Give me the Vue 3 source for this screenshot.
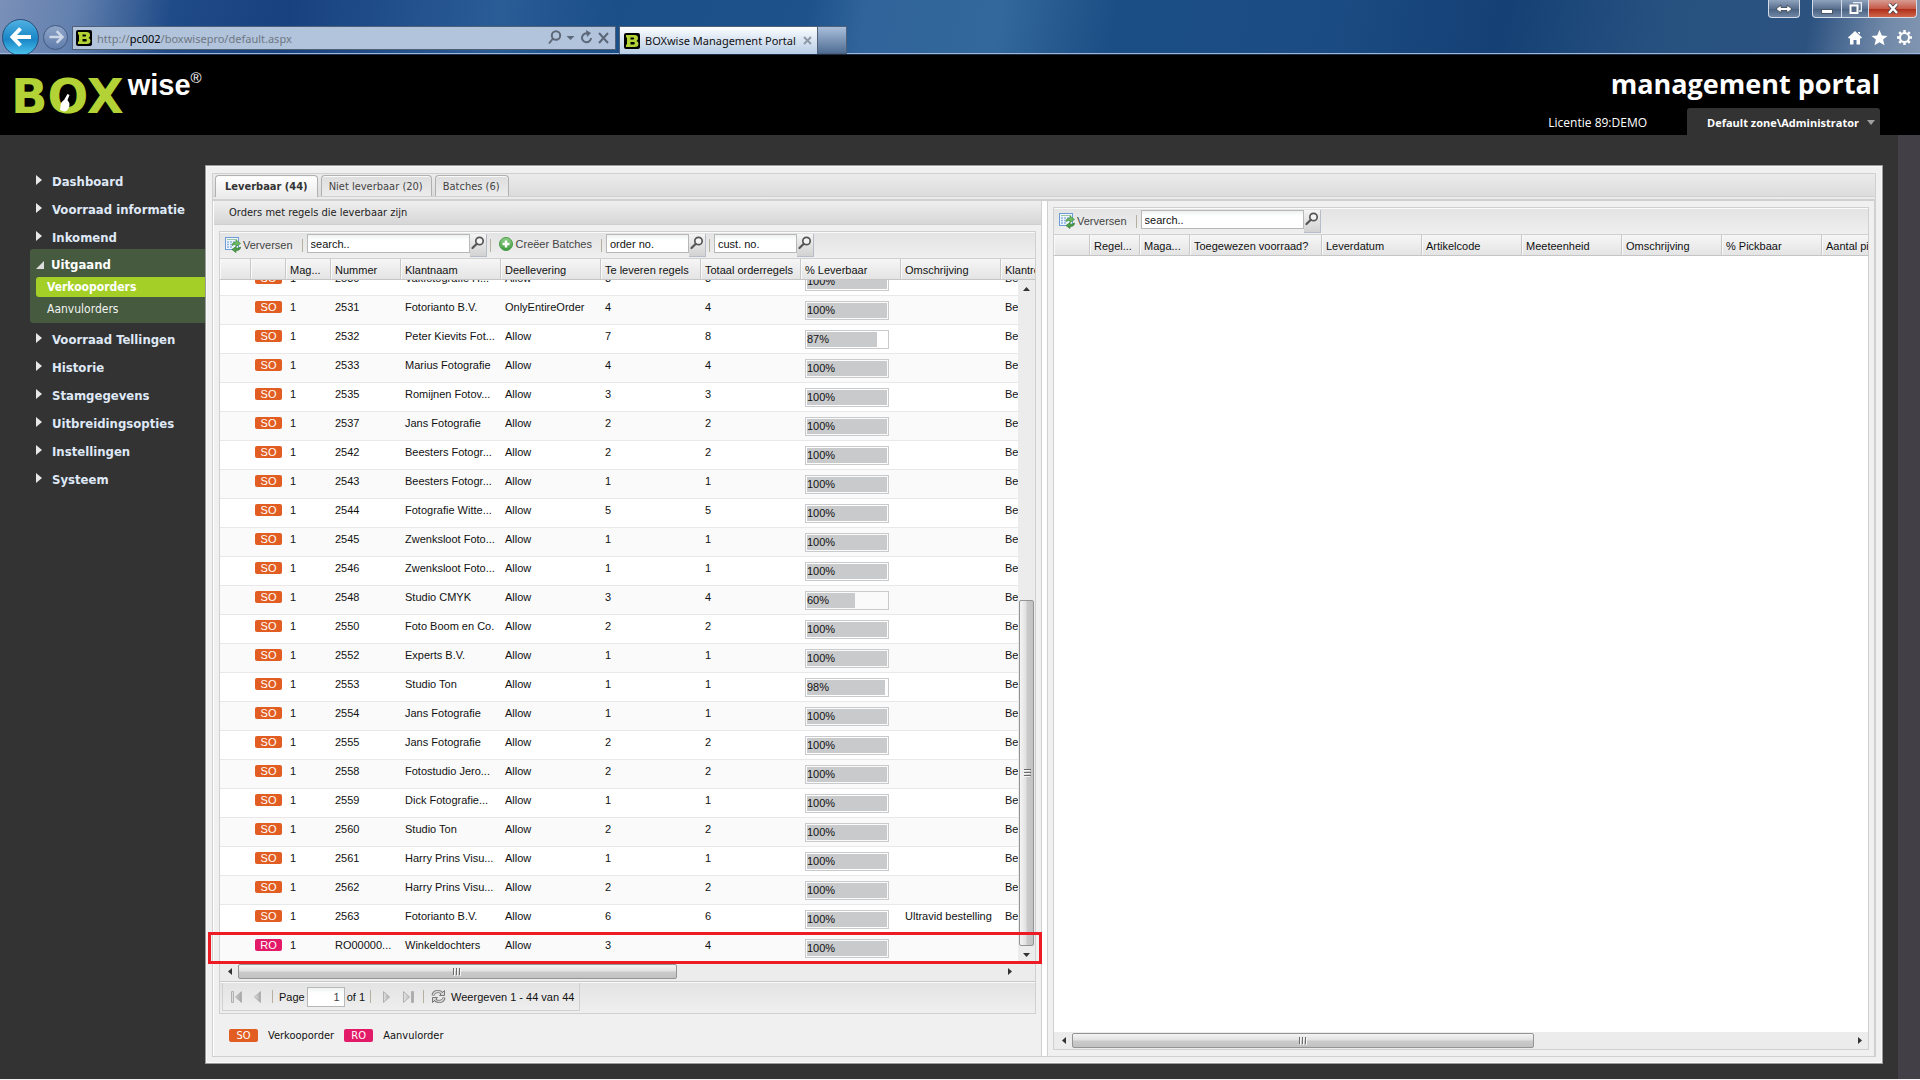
<script setup>
const menuTop = ['Dashboard', 'Voorraad informatie', 'Inkomend']
const menuBottom = ['Voorraad Tellingen', 'Historie', 'Stamgegevens', 'Uitbreidingsopties', 'Instellingen', 'Systeem']

const orderColumns = [
  { label: '', width: 31 },
  { label: '', width: 35 },
  { label: 'Mag...', width: 45 },
  { label: 'Nummer', width: 70 },
  { label: 'Klantnaam', width: 100 },
  { label: 'Deellevering', width: 100 },
  { label: 'Te leveren regels', width: 100 },
  { label: 'Totaal orderregels', width: 100 },
  { label: '% Leverbaar', width: 100 },
  { label: 'Omschrijving', width: 100 },
  { label: 'Klantreferentie', width: 100 },
]

const lineColumns = [
  { label: '', width: 36 },
  { label: 'Regel...', width: 50 },
  { label: 'Maga...', width: 50 },
  { label: 'Toegewezen voorraad?', width: 132 },
  { label: 'Leverdatum', width: 100 },
  { label: 'Artikelcode', width: 100 },
  { label: 'Meeteenheid', width: 100 },
  { label: 'Omschrijving', width: 100 },
  { label: '% Pickbaar', width: 100 },
  { label: 'Aantal pickbaar', width: 100 },
]

const orders = [
  ['SO', '2530', 'Vakfotografie H...', 'Allow', 3, 3, 100],
  ['SO', '2531', 'Fotorianto B.V.', 'OnlyEntireOrder', 4, 4, 100],
  ['SO', '2532', 'Peter Kievits Fot...', 'Allow', 7, 8, 87],
  ['SO', '2533', 'Marius Fotografie', 'Allow', 4, 4, 100],
  ['SO', '2535', 'Romijnen Fotov...', 'Allow', 3, 3, 100],
  ['SO', '2537', 'Jans Fotografie', 'Allow', 2, 2, 100],
  ['SO', '2542', 'Beesters Fotogr...', 'Allow', 2, 2, 100],
  ['SO', '2543', 'Beesters Fotogr...', 'Allow', 1, 1, 100],
  ['SO', '2544', 'Fotografie Witte...', 'Allow', 5, 5, 100],
  ['SO', '2545', 'Zwenksloot Foto...', 'Allow', 1, 1, 100],
  ['SO', '2546', 'Zwenksloot Foto...', 'Allow', 1, 1, 100],
  ['SO', '2548', 'Studio CMYK', 'Allow', 3, 4, 60],
  ['SO', '2550', 'Foto Boom en Co.', 'Allow', 2, 2, 100],
  ['SO', '2552', 'Experts B.V.', 'Allow', 1, 1, 100],
  ['SO', '2553', 'Studio Ton', 'Allow', 1, 1, 98],
  ['SO', '2554', 'Jans Fotografie', 'Allow', 1, 1, 100],
  ['SO', '2555', 'Jans Fotografie', 'Allow', 2, 2, 100],
  ['SO', '2558', 'Fotostudio Jero...', 'Allow', 2, 2, 100],
  ['SO', '2559', 'Dick Fotografie...', 'Allow', 1, 1, 100],
  ['SO', '2560', 'Studio Ton', 'Allow', 2, 2, 100],
  ['SO', '2561', 'Harry Prins Visu...', 'Allow', 1, 1, 100],
  ['SO', '2562', 'Harry Prins Visu...', 'Allow', 2, 2, 100],
  ['SO', '2563', 'Fotorianto B.V.', 'Allow', 6, 6, 100, 'Ultravid bestelling'],
  ['RO', 'RO00000...', 'Winkeldochters', 'Allow', 3, 4, 100],
].map(([type, number, customer, partial, open, total, percent, description = '']) => ({
  type, number, customer, partial, open, total, percent, description,
  reference: type === 'SO' ? 'Be' : '',
}))
</script>

<template>
  <svg class="defs" aria-hidden="true">
    <defs>
      <linearGradient id="plusFill" x1="0" y1="0" x2="0" y2="1">
        <stop offset="0" stop-color="#8fd08a" />
        <stop offset="1" stop-color="#3d9a3a" />
      </linearGradient>
      <linearGradient id="pagerFill" x1="0" y1="0" x2="1" y2="0">
        <stop offset="0" stop-color="#e4e4e4" />
        <stop offset="1" stop-color="#a4a4a4" />
      </linearGradient>
    </defs>
    <symbol id="favicon" viewBox="0 0 16 16">
      <rect width="16" height="16" rx="2" fill="#000" />
      <path fill="#b2d235" fill-rule="evenodd" d="M2 2h8.500q3.500 0 3.500 3.200 0 2-1.500 2.700 2 .6 2 2.900 0 3.200-3.800 3.200H2v-2.500h1v-7H2zM6.500 4.500v2H9q1.200 0 1.200-1t-1.200-1zM6.500 9v2.500h3q1.300 0 1.300-1.200T9.500 9z" />
    </symbol>
    <symbol id="refresh-grid" viewBox="0 0 16 16">
      <rect x=".5" y=".5" width="13" height="12" fill="#eef5fd" stroke="#6b9bd8" />
      <path d="M2 2.500h10" stroke="#9cc6a0" />
      <path d="M2 5h2M5 5h2M2 7.500h2M5 7.500h2M2 10h2M5 10h2M8 5h2" stroke="#8fb4e0" stroke-width="1.500" />
      <path d="M7 8.500q0-3.500 4-3.500V3l4.500 3.500L11 9.500V7.500q-2.500 0-4 1z" fill="#6dbb62" stroke="#3f8d3c" stroke-width=".7" />
      <path d="M15.500 10q0 3.500-4.500 3.500V15.500L7 12.500l4-3v1.800q3 0 4.500-1.300z" fill="#4ea04a" stroke="#2f7a30" stroke-width=".7" />
    </symbol>
    <symbol id="magnifier" viewBox="0 0 14 14">
      <circle cx="8.500" cy="5" r="3.700" fill="#f4f4f4" stroke="#555" stroke-width="1.700" />
      <path d="M5.800 7.800L1.500 12" stroke="#555" stroke-width="2.200" stroke-linecap="round" />
    </symbol>
    <symbol id="grip" viewBox="0 0 10 8">
      <path d="M1.500 0v7M4.500 0v7M7.500 0v7" stroke="#6a6a6a" />
      <path d="M2.500 1v7M5.500 1v7M8.500 1v7" stroke="#f6f6f6" />
    </symbol>
  </svg>

  <div class="page">
    <header class="chrome">
      <div class="nav-buttons">
        <button class="back" aria-label="Terug">
          <svg width="22" height="22" viewBox="0 0 22 22"><path d="M10.500 2.500L2.500 11l8 8.500M3 11h18" fill="none" stroke="#fff" stroke-width="4" /></svg>
        </button>
        <button class="forward" aria-label="Vooruit">
          <svg width="16" height="16" viewBox="0 0 22 22"><path d="M12 3l8 8-8 8M2 11h17" fill="none" stroke="#cdd8e8" stroke-width="3.500" /></svg>
        </button>
      </div>
      <div class="address">
        <svg width="16" height="16"><use href="#favicon" /></svg>
        <span class="url">http://<b>pc002</b>/boxwisepro/default.aspx</span>
        <svg class="address-icons" width="62" height="16" viewBox="0 0 62 16" fill="none" stroke="#5c6778" stroke-width="2">
          <circle cx="8" cy="5.500" r="4.200" />
          <path d="M5 8.500L1 13.500" />
          <path d="M18.500 6h8l-4 4z" fill="#5c6778" stroke="none" />
          <path d="M40 3.500a4.500 4.500 0 1 0 3 4.500" />
          <path d="M38 0l5 3-4 4z" fill="#5c6778" stroke="none" />
          <path d="M51 3l9 10M60 3l-9 10" />
        </svg>
      </div>
      <div class="browser-tab">
        <svg width="16" height="16"><use href="#favicon" /></svg>
        <span>BOXwise Management Portal</span>
        <svg width="9" height="9" viewBox="0 0 9 9"><path d="M1 1l7 7M8 1L1 8" stroke="#8f98a5" stroke-width="2" /></svg>
      </div>
      <button class="new-tab" aria-label="Nieuw tabblad"></button>
      <div class="window-side">
        <div class="window-buttons">
          <button class="win resize" aria-label="Formaat">
            <svg width="18" height="10" viewBox="0 0 18 10"><path d="M1 5l5-4v2.500h6V1l5 4-5 4V6.500H6V9z" fill="#fff" stroke="#4c5563" /></svg>
          </button>
          <div class="win-group">
            <button class="win min" aria-label="Minimaliseren"><svg width="12" height="6" viewBox="0 0 12 6"><rect x=".5" y="1.500" width="11" height="4" fill="#fff" stroke="#4c5563" /></svg></button>
            <button class="win max" aria-label="Herstellen"><svg width="13" height="13" viewBox="0 0 13 13"><path d="M4 .5h8.500v8.500H10" fill="none" stroke="#e8edf3" stroke-width="1.500" /><rect x="1.500" y="3.500" width="7" height="7.500" fill="#536985" stroke="#fff" stroke-width="2" /></svg></button>
            <button class="win close" aria-label="Sluiten"><svg width="12" height="11" viewBox="0 0 12 11"><path d="M2 1l8 9M10 1L2 10" stroke="#4c3a40" stroke-width="4" /><path d="M2 1l8 9M10 1L2 10" stroke="#fff" stroke-width="2.500" /></svg></button>
          </div>
        </div>
        <svg class="tools" width="64" height="16" viewBox="0 0 64 16" fill="#fff">
          <path d="M7 1l7 6.500-1.200 1.200L12 8v6.500H8.500V10h-3v4.500H2V8l-.8.700L0 7.500zM10 2h2v2.500l-2-1.800z" />
          <path d="M31.500 0l2.300 5.500 5.700.4-4.400 3.700 1.400 5.700-5-3.100-5 3.100 1.400-5.700-4.400-3.700 5.700-.4z" />
          <circle cx="56.500" cy="7.500" r="4.500" fill="none" stroke="#fff" stroke-width="2" />
          <path d="M56.500 0v3M56.500 12v3M49 7.500h3M61 7.500h3M51.200 2.200l2 2M59.800 10.800l2 2M61.800 2.200l-2 2M53.200 10.800l-2 2" stroke="#fff" stroke-width="2.500" />
        </svg>
      </div>
    </header>

    <div class="banner">
      <div class="logo">
        <span class="logo-box">BOX</span><span class="logo-wise">wise</span><span class="logo-reg">®</span>
        <svg class="logo-hand" width="12" height="18" viewBox="0 0 12 18"><path d="M8.500 0l2 1-2 5 1.800 3q.8 5-2.300 7.500-3 2-7-.5l.5-4Q1.500 8 5 6z" fill="#fff" /></svg>
      </div>
      <div class="banner-right">
        <h1>management portal</h1>
        <div class="account">
          <span class="licence">Licentie 89:DEMO</span>
          <button class="user">Default zone\Administrator
            <svg width="8" height="5" viewBox="0 0 8 5"><path d="M0 0h8L4 5z" fill="#a0a0a0" /></svg>
          </button>
        </div>
      </div>
    </div>

    <div class="workspace">
      <nav class="sidebar">
        <a v-for="item in menuTop" :key="item" href="#" class="menu-item">
          <svg width="6" height="10" viewBox="0 0 6 10"><path d="M0 0l6 5-6 5z" fill="#e8e8e8" /></svg>{{ item }}
        </a>
        <div class="menu-open">
          <a href="#" class="menu-head">
            <svg width="8" height="8" viewBox="0 0 8 8"><path d="M8 0v8H0z" fill="#dcdcdc" /></svg>Uitgaand
          </a>
          <a href="#" class="sub active">Verkooporders</a>
          <a href="#" class="sub">Aanvulorders</a>
        </div>
        <a v-for="item in menuBottom" :key="item" href="#" class="menu-item">
          <svg width="6" height="10" viewBox="0 0 6 10"><path d="M0 0l6 5-6 5z" fill="#e8e8e8" /></svg>{{ item }}
        </a>
      </nav>

      <main class="panel">
        <div class="panel-inner">
          <div class="tabs">
            <button class="tab selected">Leverbaar (44)</button>
            <button class="tab">Niet leverbaar (20)</button>
            <button class="tab">Batches (6)</button>
          </div>
          <div class="split">
            <section class="pane left">
              <h2>Orders met regels die leverbaar zijn</h2>
              <div class="pane-body">
                <div class="grid">
                  <div class="toolbar">
                    <button class="tool"><svg width="16" height="16"><use href="#refresh-grid" /></svg>Verversen</button>
                    <i class="sep wide-gap"></i>
                    <div class="search wide"><input aria-label="Zoeken" value="search.." /><button aria-label="Zoek"><svg width="14" height="14"><use href="#magnifier" /></svg></button></div>
                    <i class="sep tight"></i>
                    <button class="tool add">
                      <svg width="14" height="14" viewBox="0 0 14 14"><circle cx="7" cy="7" r="6.500" fill="url(#plusFill)" stroke="#4b9a48" /><path d="M7 3.500v7M3.500 7h7" stroke="#fff" stroke-width="2.500" /></svg>Creëer Batches
                    </button>
                    <i class="sep wide-gap"></i>
                    <div class="search"><input aria-label="Ordernummer" value="order no." /><button aria-label="Zoek order"><svg width="14" height="14"><use href="#magnifier" /></svg></button></div>
                    <i class="sep tight"></i>
                    <div class="search"><input aria-label="Klantnummer" value="cust. no." /><button aria-label="Zoek klant"><svg width="14" height="14"><use href="#magnifier" /></svg></button></div>
                  </div>
                  <div class="grid-head">
                    <table>
                      <colgroup><col v-for="(c, i) in orderColumns" :key="i" :style="{ width: c.width + 'px' }" /></colgroup>
                      <thead><tr><th v-for="(c, i) in orderColumns" :key="i">{{ c.label }}</th></tr></thead>
                    </table>
                  </div>
                  <div class="grid-body">
                    <div class="rows">
                      <table>
                        <colgroup><col v-for="(c, i) in orderColumns" :key="i" :style="{ width: c.width + 'px' }" /></colgroup>
                        <tbody>
                          <tr v-for="o in orders" :key="o.number">
                            <td></td>
                            <td><span class="badge" :class="o.type">{{ o.type }}</span></td>
                            <td>1</td>
                            <td>{{ o.number }}</td>
                            <td>{{ o.customer }}</td>
                            <td>{{ o.partial }}</td>
                            <td>{{ o.open }}</td>
                            <td>{{ o.total }}</td>
                            <td><div class="meter"><div class="fill" :style="{ width: o.percent + '%' }">{{ o.percent }}%</div></div></td>
                            <td>{{ o.description }}</td>
                            <td>{{ o.reference }}</td>
                          </tr>
                        </tbody>
                      </table>
                    </div>
                    <div class="vscroll">
                      <span class="arrow"><svg width="7" height="4" viewBox="0 0 7 4"><path d="M0 4h7L3.500 0z" fill="#333" /></svg></span>
                      <span class="track-top"></span>
                      <span class="vthumb"><svg class="turned" width="10" height="8"><use href="#grip" /></svg></span>
                      <span class="arrow"><svg width="7" height="4" viewBox="0 0 7 4"><path d="M0 0h7L3.500 4z" fill="#333" /></svg></span>
                    </div>
                    <div class="highlight"></div>
                  </div>
                  <div class="hscroll with-corner">
                    <span class="arrow"><svg width="4" height="7" viewBox="0 0 4 7"><path d="M4 0v7L0 3.500z" fill="#333" /></svg></span>
                    <span class="hthumb orders-thumb"><svg width="10" height="8"><use href="#grip" /></svg></span>
                    <span class="orders-rest"></span>
                    <span class="arrow"><svg width="4" height="7" viewBox="0 0 4 7"><path d="M0 0v7l4-3.500z" fill="#333" /></svg></span>
                  </div>
                  <div class="pager">
                    <div class="pager-box">
                      <button aria-label="Eerste" class="p-first"><svg width="11" height="12" viewBox="0 0 11 12"><path d="M.5.5h2v11h-2zM10.500.5v11L4.500 6z" fill="url(#pagerFill)" stroke="#b0b0b0" /></svg></button>
                      <button aria-label="Vorige" class="p-prev"><svg width="7" height="12" viewBox="0 0 7 12"><path d="M6.500.5v11L.5 6z" fill="url(#pagerFill)" stroke="#b0b0b0" /></svg></button>
                      <i class="sep p-sep"></i>
                      <label for="page">Page</label>
                      <input id="page" value="1" />
                      <span>of 1</span>
                      <i class="sep p-sep2"></i>
                      <button aria-label="Volgende" class="p-next"><svg width="7" height="12" viewBox="0 0 7 12"><path d="M.5.5v11L6.500 6z" fill="url(#pagerFill)" stroke="#b0b0b0" /></svg></button>
                      <button aria-label="Laatste" class="p-last"><svg width="11" height="12" viewBox="0 0 11 12"><path d="M8.500.5h2v11h-2zM.5.5v11L6.500 6z" fill="url(#pagerFill)" stroke="#b0b0b0" /></svg></button>
                      <i class="sep p-sep3"></i>
                      <button aria-label="Vernieuwen" class="p-reload">
                        <svg width="15" height="15" viewBox="0 0 15 15" fill="none" stroke-linejoin="round">
                          <path d="M2 6.500Q2.500 2.500 7 2.500q3 0 4.500 2.500M13 8.500q-.5 4-5 4-3 0-4.500-2.500" stroke="#777" stroke-width="3" />
                          <path d="M13.500 1.500v5h-5zM1.500 13.500v-5h5z" fill="#d8d8d8" stroke="#777" />
                          <path d="M2.300 6Q3 2.500 7 2.500q3 0 4.500 2.500M12.700 9q-.7 3.500-4.700 3.500-3 0-4.500-2.500" stroke="#d8d8d8" stroke-width="1.300" />
                        </svg>
                      </button>
                      <span>Weergeven 1 - 44 van 44</span>
                    </div>
                  </div>
                </div>
                <div class="legend">
                  <span class="badge SO">SO</span><span class="legend-text">Verkooporder</span>
                  <span class="badge RO">RO</span><span class="legend-text">Aanvulorder</span>
                </div>
              </div>
            </section>

            <section class="pane right">
              <div class="pane-body">
                <div class="grid">
                  <div class="toolbar">
                    <button class="tool"><svg width="16" height="16"><use href="#refresh-grid" /></svg>Verversen</button>
                    <i class="sep wide-gap"></i>
                    <div class="search wide"><input aria-label="Regels zoeken" value="search.." /><button aria-label="Zoek regel"><svg width="14" height="14"><use href="#magnifier" /></svg></button></div>
                  </div>
                  <div class="grid-head">
                    <table>
                      <colgroup><col v-for="(c, i) in lineColumns" :key="i" :style="{ width: c.width + 'px' }" /></colgroup>
                      <thead><tr><th v-for="(c, i) in lineColumns" :key="i">{{ c.label }}</th></tr></thead>
                    </table>
                  </div>
                  <div class="grid-body"></div>
                  <div class="hscroll">
                    <span class="arrow"><svg width="4" height="7" viewBox="0 0 4 7"><path d="M4 0v7L0 3.500z" fill="#333" /></svg></span>
                    <span class="hthumb lines-thumb"><svg width="10" height="8"><use href="#grip" /></svg></span>
                    <span class="lines-rest"></span>
                    <span class="arrow"><svg width="4" height="7" viewBox="0 0 4 7"><path d="M0 0v7l4-3.500z" fill="#333" /></svg></span>
                  </div>
                </div>
              </div>
            </section>
          </div>
        </div>
      </main>
      <div class="gutter"></div>
    </div>
  </div>
</template>

<style>
body {
  margin: 0;
  background: #333;
}
</style>

<style scoped>
* {
  box-sizing: border-box;
}
svg {
  display: block;
  flex: none;
}
button {
  margin: 0;
  padding: 0;
  border: 0;
  background: none;
  font: inherit;
  color: inherit;
}
input {
  margin: 0;
  font: inherit;
  border-radius: 0;
}
table {
  border-collapse: separate;
  border-spacing: 0;
  table-layout: fixed;
  width: 0;
}
.defs {
  position: absolute;
  width: 0;
  height: 0;
}
.page {
  display: flex;
  flex-direction: column;
  height: 100vh;
  overflow: hidden;
  background: #333;
  border-bottom: 1px solid #f4f4f4;
  font: 11px/14px "Liberation Sans", Arial, sans-serif;
  color: #111;
}

/* Browser chrome */
.chrome {
  display: flex;
  align-items: flex-end;
  height: 55px;
  flex: none;
  border-bottom: 1px solid #1b2c48;
  box-shadow: inset 0 -1px #9fb6d6;
  background: linear-gradient(100deg, #7a90b8 0, #6280ae 4%, #1f4b88 9%, #18427f 15%, #2a5c96 26%, #1b4f88 32%, #1d528b 42%, #30649a 45%, #33689c 52%, #1b4e84 58%, #1b4d84 68%, #154075 78%, #275280 87%, #2c5280 94%, #7189a8 98%, #8095b0 100%);
  font: 11px/16px "Noto Sans", "Open Sans", sans-serif;
  overflow: hidden;
}
.nav-buttons {
  display: flex;
  align-items: center;
  gap: 4px;
  width: 72px;
  height: 34px;
  padding-left: 2px;
}
.back {
  display: grid;
  place-items: center;
  width: 37px;
  height: 37px;
  border-radius: 50%;
  border: 1px solid #2c4d78;
  background: linear-gradient(#4fb0e2, #1a86c6 55%, #4cc4ee);
}
.forward {
  display: grid;
  place-items: center;
  width: 25px;
  height: 25px;
  border-radius: 50%;
  border: 1px solid #445a80;
  background: linear-gradient(#8fa6c8, #5f7cab);
}
.address {
  display: flex;
  align-items: center;
  gap: 5px;
  width: 544px;
  height: 24px;
  margin-bottom: 4px;
  padding: 0 5px 0 3px;
  border: 1px solid #4f6078;
  background: #b2c4dc;
}
.url {
  flex: 1;
  padding-top: 1px;
  color: #6f7782;
}
.url b {
  font-weight: 400;
  color: #000;
}
.browser-tab {
  display: flex;
  align-items: center;
  gap: 5px;
  width: 199px;
  height: 28px;
  margin-left: 3px;
  padding: 0 5px 0 4px;
  border: 1px solid #4f6078;
  border-bottom: 0;
  background: linear-gradient(#fdfeff, #dbe6f3 45%, #b9cde5);
  color: #111;
  white-space: nowrap;
}
.browser-tab span {
  flex: 1;
}
.new-tab {
  width: 29px;
  height: 28px;
  border: 1px solid #4f6078;
  border-left: 0;
  background: linear-gradient(#a9bfdb, #4f6d93);
}
.window-side {
  display: flex;
  flex-direction: column;
  align-items: flex-end;
  justify-content: space-between;
  height: 54px;
  margin-left: auto;
  padding-right: 3px;
}
.window-buttons {
  display: flex;
  gap: 12px;
}
.win-group {
  display: flex;
}
.win {
  display: grid;
  place-items: center;
  height: 18px;
  border: 1px solid #d3dce8;
  border-top: 0;
  background: linear-gradient(#8fa3bd, #5a708f 50%, #48607f 51%, #6f87a5);
}
.win.resize {
  width: 32px;
  border-radius: 0 0 4px 4px;
}
.win.min {
  width: 30px;
  border-radius: 0 0 0 4px;
}
.win.min svg {
  margin-top: 4px;
}
.win.max {
  width: 27px;
  border-left: 0;
}
.win.close {
  width: 48px;
  border-left: 0;
  border-radius: 0 0 4px 0;
  background: linear-gradient(#d79c92, #c65b4b 50%, #ac2a16 51%, #d0664a);
}
.tools {
  margin: 0 5px 8px 0;
}

/* Banner */
.banner {
  display: flex;
  justify-content: space-between;
  height: 80px;
  flex: none;
  background: #000;
  color: #fff;
}
.logo {
  position: relative;
  display: flex;
  align-items: flex-start;
  padding-left: 11px;
  font-weight: 700;
}
.logo-box {
  margin-top: 13px;
  font: 700 48px/56px "DejaVu Sans", sans-serif;
  color: #b2d235;
}
.logo-wise {
  margin: 13px 0 0 4px;
  font-size: 29px;
  line-height: 34px;
}
.logo-reg {
  margin-top: 14px;
  font-size: 15px;
  line-height: 17px;
  font-weight: 400;
}
.logo-hand {
  position: absolute;
  left: 59px;
  top: 39px;
}
.banner-right {
  display: flex;
  flex-direction: column;
  justify-content: space-between;
  align-items: flex-end;
  padding-right: 40px;
}
h1 {
  margin: 9px 0 0;
  font: 700 27px/40px "Open Sans", "Noto Sans", sans-serif;
}
.account {
  display: flex;
  align-items: center;
  gap: 40px;
  font: 12px/16px "Open Sans", "Noto Sans", sans-serif;
}
.licence {
  padding-top: 2px;
}
.user {
  display: flex;
  align-items: center;
  gap: 8px;
  height: 27px;
  padding: 2px 5px 0 20px;
  border-radius: 3px 3px 0 0;
  background: #333;
  font-size: 11px;
  font-weight: 700;
}

/* Sidebar */
.workspace {
  display: flex;
  flex: 1;
  min-height: 0;
}
.sidebar {
  width: 205px;
  flex: none;
  padding-top: 30px;
  font: 700 13px/16px "DejaVu Sans Condensed", "DejaVu Sans", sans-serif;
  font-stretch: condensed;
}
.sidebar a {
  text-decoration: none;
  color: #dfe8f6;
}
.menu-item {
  display: flex;
  align-items: center;
  gap: 10px;
  height: 28px;
  padding: 6px 0 0 36px;
}
.menu-item svg {
  margin-bottom: 4px;
}
.menu-open {
  margin-left: 30px;
  padding: 5px 0 3px 6px;
  border-radius: 3px 0 0 3px;
  background: #455a3e;
}
.sidebar .menu-head {
  display: flex;
  align-items: center;
  gap: 7px;
  height: 22px;
  margin-bottom: 1px;
  color: #fff;
}
.sidebar .sub {
  display: block;
  height: 23px;
  padding: 0 0 0 11px;
  font-size: 12px;
  line-height: 24px;
  font-weight: 400;
  color: #f2f2f2;
}
.sidebar .sub.active {
  height: 20px;
  line-height: 20px;
  border-radius: 3px 0 0 3px;
  background: #a4cf27;
  font-weight: 700;
  color: #fff;
}

/* Panel */
.panel {
  flex: 1;
  min-width: 0;
  margin: 30px 15px 15px 0;
  padding: 7px 6px 6px;
  border: 1px solid #9a9a9a;
  background: #f0f0f0;
  box-shadow: inset 0 0 0 1px #fafafa;
}
.panel-inner {
  display: flex;
  flex-direction: column;
  height: 100%;
  border: 1px solid #d0d0d0;
}
.gutter {
  width: 22px;
  flex: none;
  background: #424046;
}
.tabs {
  display: flex;
  gap: 3px;
  height: 27px;
  flex: none;
  padding: 1px 0 0 2px;
  border-bottom: 2px solid #d0d0d0;
  background: linear-gradient(#ebebeb, #dcdcdc 22px, #d0d0d0 22px, #d0d0d0 23px, #ebebeb 23px);
  font: 11px/14px "DejaVu Sans Condensed", "DejaVu Sans", sans-serif;
  font-stretch: condensed;
}
.tab {
  height: 21px;
  padding: 1px 8px 0 7px;
  border: 1px solid #b0b0b0;
  border-bottom: 0;
  border-radius: 4px 4px 0 0;
  background: linear-gradient(#dedede, #ececec);
  box-shadow: inset 0 1px #fafafa;
  color: #444;
  white-space: nowrap;
}
.tab.selected {
  height: 22px;
  padding: 0 9px;
  background: linear-gradient(#fff, #ebebeb);
  font-weight: 700;
  color: #333;
}
.split {
  display: flex;
  gap: 5px;
  flex: 1;
  min-height: 0;
  background: #fff;
}
.pane {
  display: flex;
  flex-direction: column;
  min-width: 0;
  background: #f0f0f0;
}
.left {
  flex: 829 1 0;
  border-left: 1px solid #fff;
  border-right: 1px solid #d0d0d0;
}
.right {
  flex: 828 1 0;
  border-left: 1px solid #d0d0d0;
  border-right: 1px solid #d0d0d0;
}
h2 {
  margin: 0;
  height: 24px;
  flex: none;
  padding-left: 15px;
  border-bottom: 1px solid #d0d0d0;
  background: linear-gradient(#efefef, #d6d6d6);
  font: 11px/24px "DejaVu Sans Condensed", "DejaVu Sans", sans-serif;
  font-stretch: condensed;
  color: #222;
}
.pane-body {
  display: flex;
  flex-direction: column;
  flex: 1;
  min-height: 0;
  padding: 6px 5px 0;
}
.right .pane-body {
  padding-bottom: 6px;
}
.grid {
  display: flex;
  flex-direction: column;
  flex: 1;
  min-height: 0;
  border: 1px solid #d0d0d0;
  background: #fff;
}
.toolbar {
  display: flex;
  align-items: flex-start;
  height: 27px;
  flex: none;
  padding: 2px 0 0 5px;
  border-bottom: 1px solid #d0d0d0;
  background: linear-gradient(#e3e3e3, #efefef);
  box-shadow: inset 0 1px #fafafa;
}
.tool {
  display: flex;
  align-items: center;
  gap: 2px;
  margin-top: 3px;
  color: #444;
  white-space: nowrap;
}
.tool.add {
  gap: 3px;
  margin-left: 4px;
}
.sep {
  width: 1px;
  height: 13px;
  margin-top: 5px;
  background: #b5b0a0;
}
.sep.wide-gap {
  margin-left: 9px;
  margin-right: 4px;
}
.sep.tight {
  margin-left: 3px;
  margin-right: 4px;
}
.search {
  display: flex;
  align-items: flex-start;
}
.search input {
  width: 83px;
  height: 19px;
  padding: 0 3px;
  border: 1px solid #b8b8b8;
  background: linear-gradient(#eef2f2, #fff 5px);
  color: #111;
}
.search.wide input {
  width: 163px;
}
.search button {
  display: grid;
  place-items: center;
  width: 17px;
  height: 23px;
  padding-bottom: 5px;
  border-right: 1px solid #b8bcc8;
  border-bottom: 1px solid #b8bcc8;
  background: linear-gradient(#f4f4f4, #d2d2d2);
}
.grid-head {
  height: 21px;
  flex: none;
  overflow: hidden;
  border-bottom: 1px solid #c5c5c5;
  background: linear-gradient(#f6f6f6, #e4e4e4);
}
th {
  height: 20px;
  padding: 2px 0 0 3px;
  border-left: 1px solid #fafafa;
  border-right: 1px solid #c8c8c8;
  font-weight: 400;
  text-align: left;
  white-space: nowrap;
  overflow: hidden;
}
.grid-body {
  position: relative;
  display: flex;
  flex: 1;
  min-height: 0;
}
.rows {
  display: flex;
  align-items: flex-end;
  flex: 1;
  min-width: 0;
  overflow: hidden;
}
td {
  height: 29px;
  padding: 4px 0 0 4px;
  border-bottom: 1px solid #e8e8e8;
  vertical-align: top;
  white-space: nowrap;
}
tr:nth-child(even) td {
  background: #fafafa;
}
.badge {
  display: block;
  width: 27px;
  height: 12px;
  border-radius: 2px;
  font-size: 11px;
  line-height: 12px;
  text-align: center;
  color: #fff;
}
td .badge {
  margin-top: 1px;
}
.badge.SO {
  background: #e15d22;
}
.badge.RO {
  background: #e21a68;
}
.meter {
  width: 84px;
  height: 19px;
  margin-top: 1px;
  padding: 1px;
  border: 1px solid #c9cacb;
}
.fill {
  height: 15px;
  line-height: 14px;
  background: #c9cacc;
}
.highlight {
  position: absolute;
  left: -12px;
  right: -7px;
  bottom: -1px;
  height: 32px;
  border: 3px solid #ed1c24;
}

/* Scrollbars */
.vscroll {
  display: flex;
  flex-direction: column;
  width: 17px;
  flex: none;
  background: #ececec;
}
.arrow {
  display: grid;
  place-items: center;
  width: 17px;
  height: 17px;
  flex: none;
}
.track-top {
  flex: 303;
}
.vthumb {
  display: grid;
  place-items: center;
  flex: 344;
  margin: 0 1px;
  border: 1px solid #949494;
  border-radius: 2px;
  background: linear-gradient(90deg, #f4f4f4, #e2e2e2 45%, #cacaca 55%, #c2c2c4);
}
.turned {
  transform: rotate(90deg);
}
.hscroll {
  display: flex;
  height: 17px;
  flex: none;
  padding-left: 1px;
  background: #ececec;
}
.with-corner {
  height: 18px;
  padding-right: 17px;
}
.hthumb {
  display: grid;
  place-items: center;
  height: 15px;
  margin-top: 1px;
  border: 1px solid #949494;
  border-radius: 2px;
  background: linear-gradient(#f4f4f4, #e2e2e2 45%, #cacaca 55%, #c2c2c4);
}
.orders-thumb {
  flex: 438;
}
.orders-rest {
  flex: 325;
}
.lines-thumb {
  flex: 461;
}
.lines-rest {
  flex: 318;
}

/* Pager */
.pager {
  height: 32px;
  flex: none;
  padding: 1px 0 0 2px;
  border-top: 1px solid #c8c8c8;
  background: linear-gradient(#e3e3e3, #efefef);
  box-shadow: inset 0 1px #fafafa;
}
.pager-box {
  display: inline-flex;
  align-items: center;
  height: 28px;
  padding-right: 5px;
  border: 1px solid #d0d0d0;
  border-top: 0;
  white-space: nowrap;
}
.pager-box .sep {
  margin-top: 0;
}
.p-first {
  margin-left: 8px;
}
.p-prev {
  margin-left: 12px;
}
.pager-box .p-sep {
  margin-left: 11px;
  margin-right: 6px;
}
.pager-box input {
  width: 38px;
  height: 20px;
  margin: 0 2px;
  padding: 0 4px;
  border: 1px solid #b8b8b8;
  background: linear-gradient(#eef2f2, #fff 5px);
  text-align: right;
  color: #444;
}
.pager-box .p-sep2 {
  margin-left: 5px;
  margin-right: 12px;
}
.p-last {
  margin-left: 13px;
}
.pager-box .p-sep3 {
  margin-left: 9px;
  margin-right: 7px;
}
.p-reload {
  margin-right: 5px;
}
.legend {
  display: flex;
  align-items: center;
  height: 42px;
  flex: none;
  padding: 1px 0 0 10px;
  font: 11px/14px "DejaVu Sans Condensed", "DejaVu Sans", sans-serif;
  font-stretch: condensed;
}
.legend .badge {
  width: 29px;
  height: 13px;
  line-height: 13px;
}
.legend-text {
  margin: 0 10px;
}
</style>
